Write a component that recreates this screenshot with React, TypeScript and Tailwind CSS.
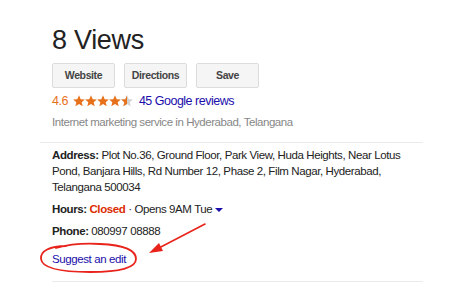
const STAR = 'M12 1.5l3.1 7.1 7.6.6-5.8 5 1.8 7.5L12 17.7l-6.7 4 1.8-7.5-5.8-5 7.6-.6z';

function Stars() {
  return (
    <span className="inline-flex items-center">
      {[0, 1, 2, 3].map((i) => (
        <svg key={i} width="12" height="12" viewBox="1 1 22 22">
          <path d={STAR} fill="#e7711b" />
        </svg>
      ))}
      <svg width="12" height="12" viewBox="1 1 22 22">
        <defs>
          <clipPath id="half">
            <rect x="0" y="0" width="12" height="24" />
          </clipPath>
        </defs>
        <path d={STAR} fill="#d0d0d0" />
        <path d={STAR} fill="#e7711b" clipPath="url(#half)" />
      </svg>
    </span>
  );
}

export default function App() {
  const buttons = ['Website', 'Directions', 'Save'];

  return (
    <div className="relative w-[459px] h-[308px] bg-white overflow-hidden font-['Liberation_Sans',Arial,sans-serif] text-[#222]">
      <div className="pl-[52px] pr-[36px] pt-[24px]">
        <h1 className="text-[27px] leading-[32px] text-[#222] font-normal tracking-[-0.3px]">8 Views</h1>

        <div className="flex gap-[9px] mt-[7px]">
          {buttons.map((b) => (
            <button
              key={b}
              className="w-[63px] h-[25px] rounded-[2px] border border-[#dcdcdc] bg-[#f5f5f5] text-[10.5px] tracking-[-0.4px] font-bold text-[#444]"
            >
              {b}
            </button>
          ))}
        </div>

        <div className="flex items-center gap-[5px] mt-[5px] text-[12.5px] leading-[16px] tracking-[-0.5px]">
          <span className="text-[#e7711b]">4.6</span>
          <Stars />
          <span className="text-[#1a0dab] ml-[1px]">45 Google reviews</span>
        </div>

        <p className="mt-[5px] text-[11.5px] leading-[16px] tracking-[-0.45px] text-[#878787]">
          Internet marketing service in Hyderabad, Telangana
        </p>
      </div>

      <div className="ml-[40px] mr-[36px] mt-[12px] border-t border-[#ebebeb]" />

      <div className="pl-[52px] pr-[36px] pt-[4px] text-[11.5px] leading-[16px] tracking-[-0.4px] text-[#222]">
        <p>
          <span className="font-bold">Address:</span> Plot No.36, Ground Floor, Park View, Huda Heights, Near Lotus
          Pond, Banjara Hills, Rd Number 12, Phase 2, Film Nagar, Hyderabad, Telangana 500034
        </p>
        <p className="mt-[6px]">
          <span className="font-bold">Hours:</span> <span className="font-bold text-[#dd2c00]">Closed</span> · Opens 9AM Tue{' '}
          <span className="inline-block align-middle w-0 h-0 border-l-[4px] border-r-[4px] border-t-[4px] border-l-transparent border-r-transparent border-t-[#1a0dab]" />
        </p>
        <p className="mt-[6px]">
          <span className="font-bold">Phone:</span> 080997 08888
        </p>
        <p className="mt-[12px] text-[#1a0dab]">Suggest an edit</p>
      </div>

      <div className="ml-[52px] mr-[36px] mt-[14px] border-t border-[#ebebeb]" />

      <svg className="absolute left-0 top-0 pointer-events-none" width="459" height="308" viewBox="0 0 459 308">
        <path
          d="M66 246 C 50 246, 40 251, 41 259 C 42 268, 58 272, 90 272 C 120 272, 136 268, 136 259 C 136 250, 124 245, 100 244 C 84 243, 70 244, 56 248"
          fill="none"
          stroke="#e8231b"
          strokeWidth="1.8"
          strokeLinecap="round"
        />
        <line x1="205" y1="224" x2="157" y2="249" stroke="#e8231b" strokeWidth="1.6" strokeLinecap="round" />
        <polygon points="149,253 159,243 163,251" fill="#e8231b" />
      </svg>
    </div>
  );
}
